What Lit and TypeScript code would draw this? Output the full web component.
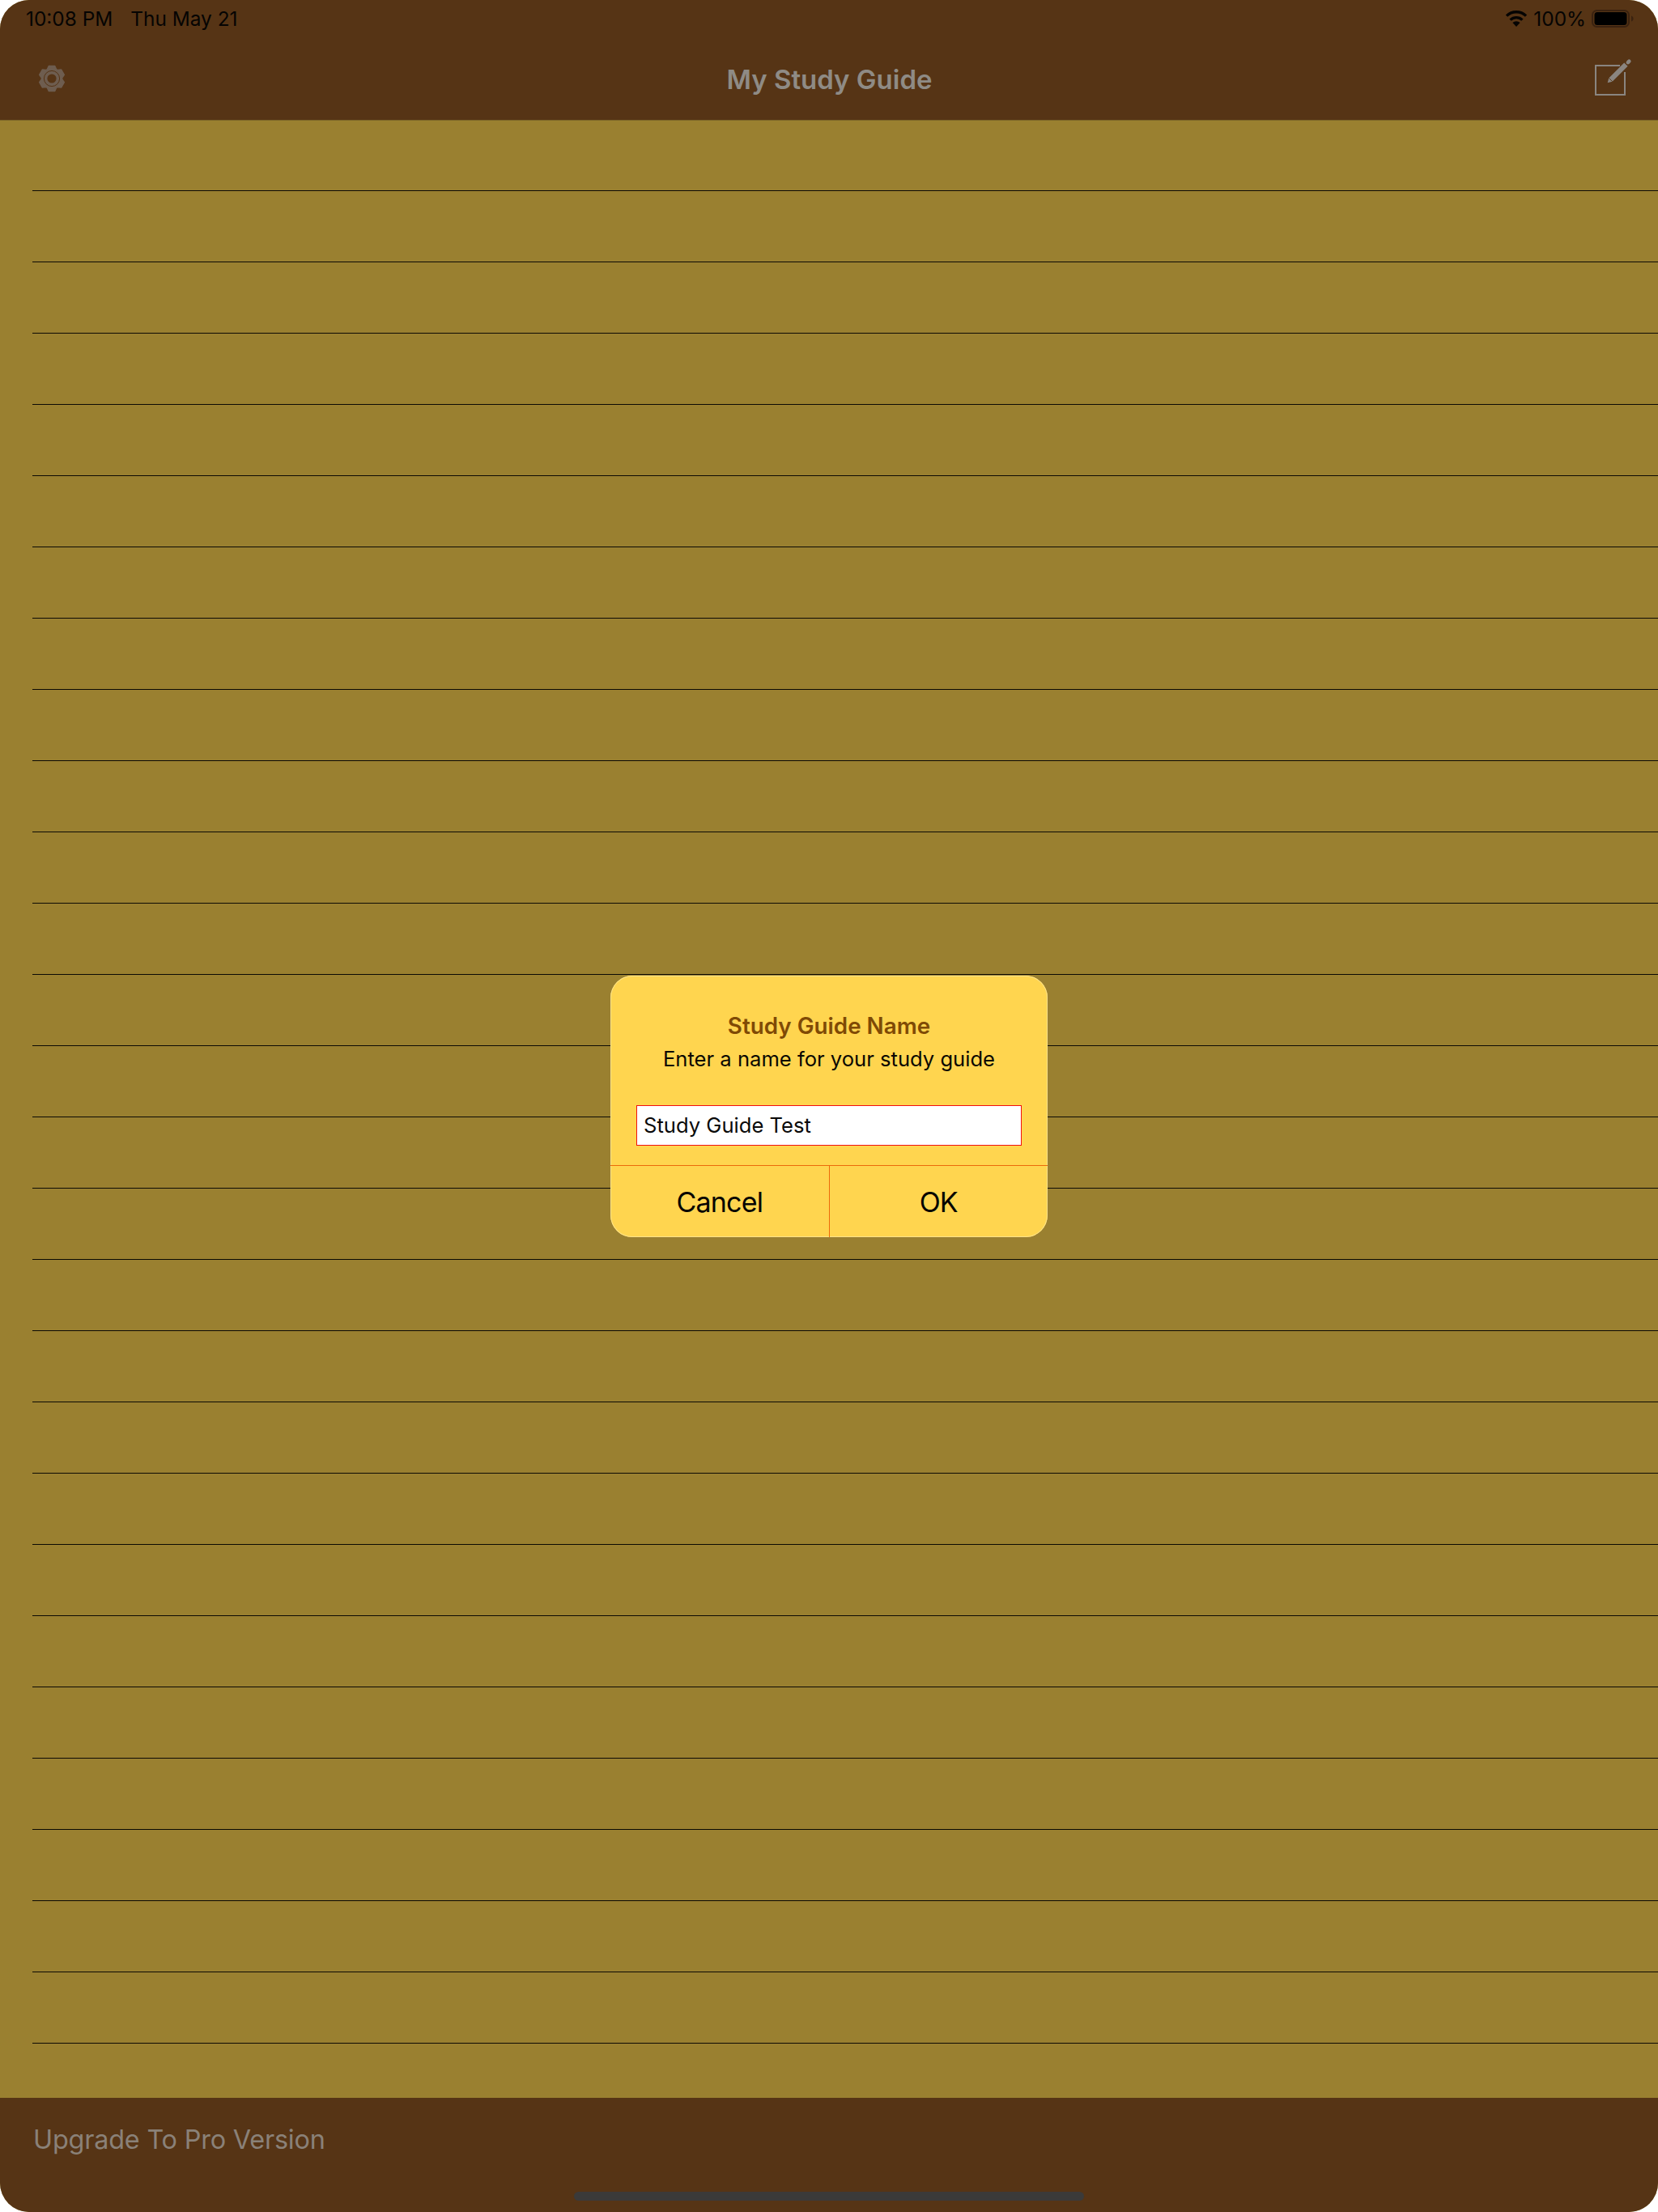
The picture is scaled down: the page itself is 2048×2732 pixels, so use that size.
import { LitElement, html, css, svg } from "lit";
import { customElement } from "lit/decorators.js";

function gearPath(): string {
  const cx = 17, cy = 17, out = 16, root = 12.6;
  const pts: string[] = [];
  for (let i = 0; i < 6; i++) {
    const a = -90 + i * 60;
    for (const [d, r] of [[-27, root], [-13, out], [13, out], [27, root]] as [number, number][]) {
      const t = ((a + d) * Math.PI) / 180;
      pts.push(`${(cx + r * Math.cos(t)).toFixed(2)},${(cy + r * Math.sin(t)).toFixed(2)}`);
    }
  }
  return pts.join(" ");
}

@customElement("app-root")
export class AppRoot extends LitElement {
  static styles = css`
    :host {
      display: block;
      width: 2048px;
      height: 2732px;
      background: #fff;
      font-family: Inter, "Liberation Sans", sans-serif;
    }
    .screen {
      position: relative;
      width: 100%;
      height: 100%;
      display: flex;
      flex-direction: column;
      border-radius: 36px;
      overflow: hidden;
      background: #9a8030;
    }
    .top {
      height: 148px;
      flex: none;
      background: #563415;
      display: flex;
      flex-direction: column;
    }
    .status {
      height: 46px;
      padding: 0 30px 0 32px;
      display: flex;
      align-items: center;
      justify-content: space-between;
      font-size: 24.4px;
      color: #050403;
    }
    .status-left { display: flex; gap: 22px; }
    .status-right { display: flex; align-items: center; gap: 7px; }
    .nav {
      flex: 1;
      display: flex;
      align-items: center;
      justify-content: space-between;
      padding: 0 29px 0 47px;
    }
    .title {
      font-size: 33px;
      font-weight: 600;
      color: #8f8b85;
      margin-left: 1px;
      padding-top: 2px;
    }
    .icon { display: block; flex: none; }
    .lines {
      flex: 1;
      box-shadow: inset 0 1px 0 #7a6428;
    }
    .row {
      height: 88px;
      box-sizing: border-box;
      margin-left: 40px;
      border-bottom: 1px solid #0c0a04;
    }
    .bottom {
      height: 141px;
      flex: none;
      background: #563415;
      box-sizing: border-box;
      padding: 32px 41px 0;
      font-size: 32.4px;
      letter-spacing: -0.2px;
      color: #8a8178;
      display: flex;
      flex-direction: column;
      justify-content: space-between;
    }
    .home {
      align-self: center;
      width: 630px;
      height: 11px;
      margin-bottom: 14px;
      border-radius: 6px;
      background: #3b3a39;
    }
    .dialog {
      position: absolute;
      left: 754px;
      top: 1205px;
      width: 540px;
      height: 323px;
      box-sizing: border-box;
      border-radius: 27px;
      background: #ffd54f;
      box-shadow: inset 0 0 0 1px #ffe38a;
      display: flex;
      flex-direction: column;
      overflow: hidden;
    }
    .dlg-body {
      flex: 1;
      display: flex;
      flex-direction: column;
      align-items: center;
      padding-top: 45px;
    }
    .dlg-title {
      font-size: 27.8px;
      font-weight: 600;
      line-height: 34px;
      color: #7f4a05;
    }
    .dlg-msg {
      font-size: 25.6px;
      line-height: 34px;
      margin-top: 7px;
      color: #0a0802;
    }
    .field {
      margin-top: 40px;
      width: 476px;
      height: 50px;
      box-sizing: border-box;
      border: 1px solid #f01010;
      background: #fff;
      padding: 0 8px 2px;
      font: 25.6px Inter, "Liberation Sans", sans-serif;
      color: #0a0a0a;
      border-radius: 0;
      outline: none;
    }
    .buttons {
      height: 88px;
      flex: none;
      display: flex;
      border-top: 1px solid #ec6a0a;
    }
    .btn {
      flex: 1;
      display: flex;
      align-items: center;
      justify-content: center;
      font-size: 34px;
      letter-spacing: -0.8px;
      color: #050402;
    }
    .btn + .btn { border-left: 1px solid #ec6a0a; }
  `;

  render() {
    const rows = Array.from({ length: 27 });
    return html`
      <div class="screen">
        <header class="top">
          <div class="status">
            <div class="status-left"><span>10:08 PM</span><span>Thu May 21</span></div>
            <div class="status-right">
              <svg class="icon" width="28" height="20" viewBox="0 0 28 20">
                <path d="M14 20l-4.6-5a6.6 6.6 0 0 1 9.2 0z" fill="#050403" />
                <path d="M6.600 11.600a10.600 10.600 0 0 1 14.800 0M2 6.600a17.200 17.200 0 0 1 24 0" fill="none" stroke="#050403" stroke-width="3.4" />
              </svg>
              <span>100%</span>
              <svg class="icon" width="52" height="22" viewBox="0 0 52 22">
                <rect x="1" y="1" width="45" height="20" rx="5.5" fill="none" stroke="#3a2210" stroke-width="2" />
                <rect x="3.500" y="3" width="40" height="16" rx="3.5" fill="#000" />
                <path d="M49 7.500c1.600.5 2.600 2 2.600 3.500s-1 3-2.600 3.500z" fill="#3a2210" />
              </svg>
            </div>
          </div>
          <div class="nav">
            <svg class="icon" width="34" height="34" viewBox="0 0 34 34">
              <polygon points=${gearPath()} fill="#6e5d4f" stroke="#6e5d4f" stroke-width="1.5" stroke-linejoin="round" />
              <circle cx="17" cy="17" r="9.6" fill="none" stroke="#563415" stroke-width="1" />
              <circle cx="17" cy="17" r="5.6" fill="#563415" />
            </svg>
            <div class="title">My Study Guide</div>
            <svg class="icon" width="52" height="52" viewBox="0 0 52 52">
              ${svg`
                <path d="M34 10H4v36h36V18" fill="none" stroke="#8a8580" stroke-width="2" />
                <path d="M18.700 31.300L20.200 25.400 39.200 6.400 43.600 10.800 24.600 29.800z" fill="#8a8580" />
                <path d="M20.300 25.300L24.700 29.700" stroke="#563415" stroke-width="0.9" />
                <path d="M43.900 6.100L45.300 4.700" stroke="#8a8580" stroke-width="4.6" stroke-linecap="round" />
              `}
            </svg>
          </div>
        </header>
        <main class="lines">
          ${rows.map(() => html`<div class="row"></div>`)}
        </main>
        <footer class="bottom">
          <div>Upgrade To Pro Version</div>
          <div class="home"></div>
        </footer>
        <div class="dialog">
          <div class="dlg-body">
            <div class="dlg-title">Study Guide Name</div>
            <div class="dlg-msg">Enter a name for your study guide</div>
            <input class="field" .value=${"Study Guide Test"} readonly />
          </div>
          <div class="buttons">
            <div class="btn">Cancel</div>
            <div class="btn">OK</div>
          </div>
        </div>
      </div>
    `;
  }
}
